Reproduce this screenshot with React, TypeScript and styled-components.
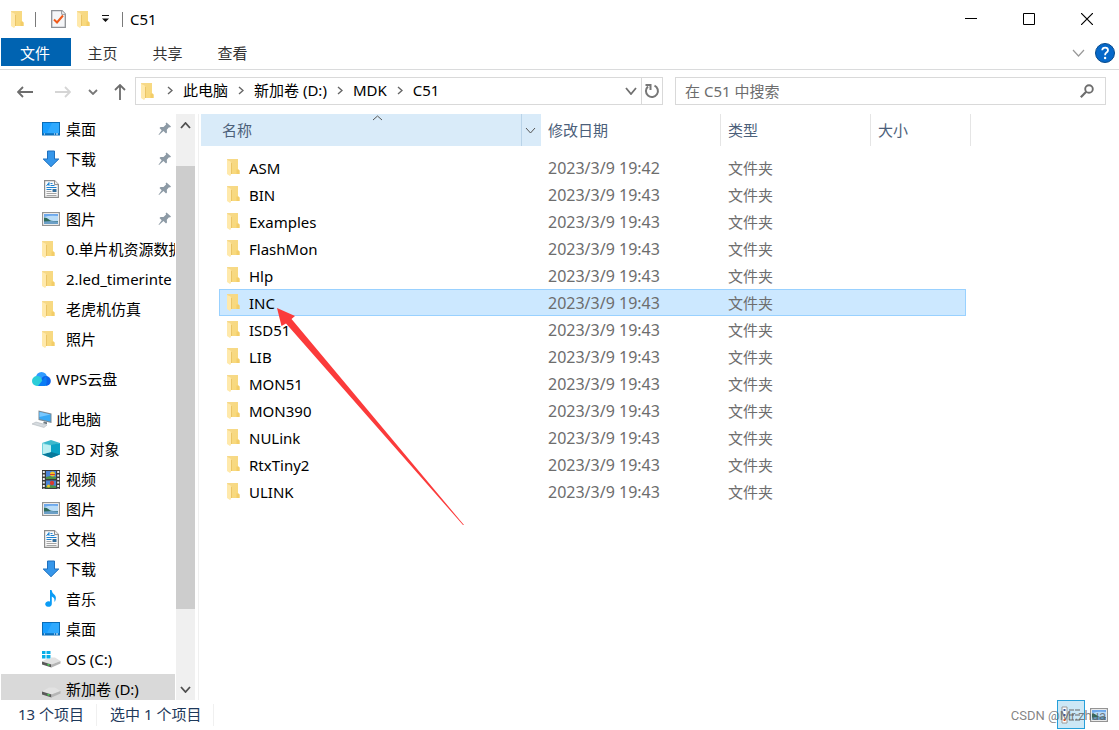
import React from "react";
import styled, { createGlobalStyle, css } from "styled-components";

const GlobalStyle = createGlobalStyle`
  * { box-sizing: border-box; }
  body {
    margin: 0;
    background: #fff;
    color: #000;
    font: 15px/20px "Noto Sans", "Noto Sans CJK SC", sans-serif;
  }
  button, input {
    font: inherit;
    color: inherit;
    background: none;
    border: 0;
    padding: 0;
    margin: 0;
  }
  svg { display: block; flex: none; }
`;

const Window = styled.div`
  position: relative;
  display: flex;
  flex-direction: column;
  height: 100vh;
  overflow: hidden;
`;

/* ---------- title bar ---------- */

const TitleBar = styled.header`
  display: flex;
  align-items: center;
  justify-content: space-between;
  height: 38px;
  padding: 0 3px 0 11px;
`;

const QuickAccess = styled.div`
  display: flex;
  align-items: center;
`;

const Divider = styled.span<{ $gap: number }>`
  width: 1px;
  height: 15px;
  margin-left: ${(p) => p.$gap}px;
  background: #7a7a7a;
`;

const QuickButton = styled.button<{ $gap: number }>`
  margin-left: ${(p) => p.$gap}px;
`;

const WindowTitle = styled.h1`
  margin: 0 0 0 7px;
  font-size: 15px;
  font-weight: 400;
`;

const WindowControls = styled.div`
  display: flex;
`;

const ControlButton = styled.button`
  display: flex;
  align-items: center;
  justify-content: center;
  width: 58px;
  height: 38px;
`;

/* ---------- ribbon ---------- */

const Ribbon = styled.nav`
  display: flex;
  align-items: flex-start;
  height: 32px;
  padding: 0 4px 0 1px;
  border-bottom: 1px solid #dadbdc;
`;

const RibbonTab = styled.button<{ $primary?: boolean }>`
  width: ${(p) => (p.$primary ? 70 : 65)}px;
  height: 28px;
  padding: 2px 2px 0 0;
  color: ${(p) => (p.$primary ? "#fff" : "#333")};
  background: ${(p) => (p.$primary ? "#0063b1" : "none")};
`;

const RibbonTools = styled.div`
  display: flex;
  align-items: center;
  gap: 10px;
  height: 30px;
  margin-left: auto;
`;

/* ---------- navigation bar ---------- */

const NavBar = styled.div`
  display: flex;
  align-items: center;
  height: 44px;
  padding: 0 13px 2px 5px;
`;

const NavButton = styled.button<{ $width: number }>`
  display: flex;
  align-items: center;
  justify-content: center;
  width: ${(p) => p.$width}px;
  height: 28px;
  padding-top: 2px;
`;

const field = css`
  display: flex;
  align-items: center;
  height: 28px;
  min-width: 0;
  border: 1px solid #d9d9d9;
`;

const AddressBar = styled.div`
  ${field}
  flex: 521 1 0;
  padding-left: 5px;
`;

const Crumbs = styled.ol`
  display: flex;
  flex: 1;
  min-width: 0;
  margin: 0;
  padding: 0 0 2px 3px;
  list-style: none;
  overflow: hidden;
  white-space: nowrap;
`;

const Crumb = styled.li`
  display: flex;
  align-items: center;
`;

const CrumbArrow = styled.span`
  display: flex;
  justify-content: center;
  width: 26px;
`;

const AddressButton = styled.button<{ $divided?: boolean }>`
  display: flex;
  align-items: center;
  justify-content: center;
  width: ${(p) => (p.$divided ? 21 : 20)}px;
  height: 26px;
  border-left: ${(p) => (p.$divided ? "1px solid #d9d9d9" : "0")};
`;

const SearchBox = styled.label`
  ${field}
  flex: 409 1 0;
  margin-left: 12px;
  padding: 0 11px 0 9px;
`;

const SearchInput = styled.input`
  flex: 1;
  min-width: 0;
  outline: 0;
  &::placeholder { color: #6d6d6d; opacity: 1; }
`;

/* ---------- body ---------- */

const Body = styled.div`
  display: flex;
  flex: 1;
  min-height: 0;
`;

const Sidebar = styled.aside`
  display: flex;
  padding-right: 3px;
  margin-right: 2px;
  border-right: 1px solid #f0f0f0;
`;

const Tree = styled.ul`
  width: 176px;
  margin: 0;
  padding: 0 1px;
  list-style: none;
  overflow: hidden;
`;

const TreeItem = styled.li<{ $root?: boolean; $selected?: boolean }>`
  display: flex;
  align-items: center;
  gap: 6px;
  height: 30px;
  margin-top: ${(p) => (p.$root ? 10 : 0)}px;
  padding-left: ${(p) => (p.$root ? 31 : 41)}px;
  background: ${(p) => (p.$selected ? "#d9d9d9" : "none")};
`;

const TreeIcon = styled.span`
  display: flex;
  flex: none;
  width: 18px;
`;

const TreeLink = styled.a`
  flex: 1;
  min-width: 0;
  overflow: hidden;
  white-space: nowrap;
  color: inherit;
  text-decoration: none;
`;

const PinSlot = styled.span`
  margin-right: 3px;
`;

const ScrollBar = styled.div`
  display: flex;
  flex-direction: column;
  width: 19px;
  background: #f0f0f0;
`;

const ScrollButton = styled.button`
  display: flex;
  align-items: center;
  justify-content: center;
  height: 22px;
`;

const ScrollSpace = styled.div<{ $share: number }>`
  flex: ${(p) => p.$share} 1 0;
`;

const ScrollThumb = styled(ScrollSpace)`
  background: #cdcdcd;
`;

const Content = styled.main`
  position: relative;
  flex: 1;
  min-width: 0;
  overflow: hidden;
`;

const FileTable = styled.table`
  display: block;
`;

const FileHead = styled.thead`
  display: block;
  margin-bottom: 8px;
  color: #4c607a;
`;

const FileBody = styled.tbody`
  display: block;
`;

const HeadRow = styled.tr`
  display: grid;
  grid-template-columns: 340px 180px 150px 100px;
  height: 32px;
`;

const HeadCell = styled.th<{ $sorted?: boolean }>`
  position: relative;
  display: flex;
  align-items: center;
  padding: 0 0 0 ${(p) => (p.$sorted ? 21 : 7)}px;
  font-weight: 400;
  background: ${(p) => (p.$sorted ? "#d9ebf9" : "none")};
  border-right: ${(p) => (p.$sorted ? "0" : "1px solid #e5e5e5")};
`;

const SortMark = styled.span`
  position: absolute;
  top: 1px;
  left: 171px;
`;

const FilterButton = styled.button`
  display: flex;
  align-items: center;
  justify-content: center;
  width: 20px;
  height: 32px;
  margin-left: auto;
  padding-right: 2px;
  border-left: 1px solid #b9d3e8;
`;

const FileRow = styled.tr<{ $selected?: boolean }>`
  display: grid;
  grid-template-columns: 322px 180px 150px 95px;
  width: 747px;
  height: 27px;
  margin-left: 18px;
  ${(p) =>
    p.$selected &&
    css`
      background: #cce8ff;
      box-shadow: inset 0 0 0 1px #99d1ff;
    `}
`;

const FileCell = styled.td<{ $name?: boolean }>`
  display: flex;
  align-items: center;
  gap: 9px;
  padding: 0 0 0 ${(p) => (p.$name ? 8 : 7)}px;
  color: ${(p) => (p.$name ? "#000" : "#6d6d6d")};
`;

const DateText = styled.time`
  font-size: 16px;
`;

const Pointer = styled.svg`
  position: absolute;
  left: 76px;
  top: 194px;
  pointer-events: none;
`;

/* ---------- status bar ---------- */

const StatusBar = styled.footer`
  display: flex;
  align-items: center;
  height: 30px;
  padding: 0 11px 1px 18px;
  color: #1e395b;
`;

const StatusText = styled.span`
  padding: 0 12px 2px 0;
  margin-right: 13px;
  border-right: 1px solid #f0f0f0;
`;

const ViewButtons = styled.div`
  display: flex;
  align-items: center;
  gap: 4px;
  margin-left: auto;
`;

const ViewButton = styled.button<{ $active?: boolean }>`
  display: flex;
  align-items: center;
  justify-content: center;
  width: ${(p) => (p.$active ? 28 : 19)}px;
  height: 29px;
  background: ${(p) => (p.$active ? "#cce8f6" : "none")};
  border: ${(p) => (p.$active ? "1px solid #26a0da" : "0")};
`;

const Watermark = styled.span`
  position: absolute;
  right: 13px;
  bottom: 4px;
  font-family: Roboto, sans-serif;
  font-size: 13px;
  color: rgba(90, 90, 90, 0.75);
`;

/* ---------- icons ---------- */

const FolderIcon = () => (
  <svg width="13" height="17" viewBox="0 0 13 17">
    <defs>
      <linearGradient id="folderBody" x1="0" y1="0" x2="1" y2="1">
        <stop offset="0" stopColor="#f6d98b" />
        <stop offset="1" stopColor="#f9d978" />
      </linearGradient>
    </defs>
    <path d="M0 0h11v10l1.500 1.500V15H2z" fill="url(#folderBody)" />
    <path d="M9.500 10.500h1.500l1.500 1V15H9.500z" fill="#f3cd69" />
    <path d="M0 1l3.500 1.500q.5.500.5 1.500v12l-1 1-3-2z" fill="#ffe9ab" />
    <path d="M4.500 4v11" stroke="#ebc566" strokeWidth="1" />
  </svg>
);

const CheckDocIcon = () => (
  <svg width="15" height="18" viewBox="0 0 15 18">
    <path d="M.7.700h10.300l3.300 3.300v13.300H.7z" fill="#f5f6f8" stroke="#8e9196" strokeWidth="1.300" />
    <path d="M10.700.7v3.600h3.600" fill="#fff" stroke="#8e9196" />
    <path d="M3 9.500l3 3 6-7" fill="none" stroke="#f05a1a" strokeWidth="2" />
  </svg>
);

const CustomizeIcon = () => (
  <svg width="7" height="8" viewBox="0 0 7 8">
    <path d="M0 0h7v1H0zM0 3.500h7L3.500 7z" fill="#111" />
  </svg>
);

type ChevronProps = { w: number; h: number; dir: "up" | "down" | "right"; color?: string; weight?: number };
const Chevron = ({ w, h, dir, color = "#666", weight = 1 }: ChevronProps) => {
  const d = {
    up: `M1 ${h - 1}L${w / 2} 1L${w - 1} ${h - 1}`,
    down: `M1 1L${w / 2} ${h - 1}L${w - 1} 1`,
    right: `M1 1L${w - 1} ${h / 2}L1 ${h - 1}`,
  }[dir];
  return (
    <svg width={w} height={h}>
      <path d={d} fill="none" stroke={color} strokeWidth={weight} />
    </svg>
  );
};

const ArrowIcon = ({ dir, color }: { dir: "left" | "right" | "up"; color: string }) => (
  <svg width="16" height="16" viewBox="0 0 16 16">
    <g
      transform={dir === "left" ? undefined : dir === "right" ? "rotate(180 8 8)" : "rotate(90 8 8)"}
      fill="none"
      stroke={color}
      strokeWidth="1.800"
    >
      <path d="M1 8h15M6 3L1 8l5 5" />
    </g>
  </svg>
);

const RefreshIcon = () => (
  <svg width="16" height="16" viewBox="0 0 16 16">
    <path d="M10.500 2.600A6 6 0 1 1 4 3.500" fill="none" stroke="#777" strokeWidth="2" />
    <path d="M1.500 2h5v5" fill="none" stroke="#777" strokeWidth="2" />
  </svg>
);

const SearchIcon = () => (
  <svg width="14" height="14" viewBox="0 0 14 14">
    <circle cx="9" cy="5" r="3.800" fill="none" stroke="#6d6d6d" strokeWidth="1.900" />
    <path d="M6.200 7.800L.8 13.200" stroke="#6d6d6d" strokeWidth="2.200" />
  </svg>
);

const HelpIcon = () => (
  <svg width="20" height="20" viewBox="0 0 20 20">
    <circle cx="10" cy="10" r="9.500" fill="#0668c9" stroke="#064a8c" />
    <path d="M7.200 7.300Q7.400 4.700 10.200 4.700T13 7.200Q13 8.500 11.500 9.600T10.100 12.200" fill="none" stroke="#fff" strokeWidth="1.800" />
    <circle cx="10.100" cy="15" r="1.200" fill="#fff" />
  </svg>
);

const PinIcon = () => (
  <svg width="14" height="14" viewBox="0 0 14 14">
    <path d="M8.500.5L13 4.500l-1 1-1-.3-2.200 2.600.2 2.700-1 1-2.500-2.500L1 13l-.5-.3 3.200-4.400L1.500 6l1-1 3 .1 2.600-2.500L7.600 1.500z" fill="#8d9aa5" />
  </svg>
);

const DesktopIcon = () => (
  <svg width="18" height="14" viewBox="0 0 18 14">
    <rect x=".5" y=".5" width="17" height="12.500" fill="#1a9fff" stroke="#0a6db8" />
    <path d="M10 1h7v10H5z" fill="#3fb2ff" opacity=".6" />
    <path d="M1 12h16" stroke="#075a9c" />
    <path d="M2 12h1M12 12h1M14 12h2" stroke="#fff" />
  </svg>
);

const DownloadIcon = () => (
  <svg width="18" height="18" viewBox="0 0 18 18">
    <path d="M5.500 1h7v8h4.300L9 16.700 1.200 9h4.300z" fill="#3596ea" stroke="#1e6fbd" />
  </svg>
);

const DocumentIcon = () => (
  <svg width="18" height="18" viewBox="0 0 18 18">
    <path d="M2.600.6h9.900l3.900 3.900v12.900H2.600z" fill="#fafafa" stroke="#8c8c8c" strokeWidth="1.200" />
    <path d="M12.500.6v4h4" fill="#eee" stroke="#8c8c8c" />
    <path d="M4.500 6L7 2.500V6M5.500 4.500H7M8.500 3.500h2M8.500 5.500h4M4.500 7.500h10M4.500 9.500h5" fill="none" stroke="#1b82d2" />
    <path d="M4.500 11.500h5M4.500 13.500h10M4.500 15.500h10" stroke="#a5a5a5" />
    <rect x="10.500" y="9" width="4" height="3" fill="#356f9c" />
  </svg>
);

const PictureIcon = () => (
  <svg width="18" height="14" viewBox="0 0 18 14">
    <rect x=".6" y=".6" width="16.800" height="12.800" fill="#fff" stroke="#949494" strokeWidth="1.200" />
    <rect x="2" y="2" width="14" height="10" fill="#b9dcf8" />
    <path d="M2 2h14v2Q8 3 2 5z" fill="#6da8ec" />
    <path d="M2 5.500q3 0 5 2t9 1.500v1H2z" fill="#2f6b5d" />
    <path d="M2 9.500Q9 8.500 16 9.500V12H2z" fill="#6b9fc6" />
  </svg>
);

const CloudIcon = () => (
  <svg width="19" height="14" viewBox="0 0 19 14">
    <circle cx="9.500" cy="5.500" r="5.500" fill="#2f9bff" />
    <circle cx="13.800" cy="9" r="5" fill="#0b62ea" />
    <path d="M5 4a5 5 0 0 1 5 4l4 6H5A5 5 0 0 1 5 4z" fill="#2bcdd9" />
    <path d="M6 14l8-10q2 7-1 10z" fill="#0a7cf5" />
  </svg>
);

const ComputerIcon = () => (
  <svg width="20" height="18" viewBox="0 0 20 18">
    <path d="M6.500.5l13 3v9.500l-13-3z" fill="#7c8b96" />
    <path d="M7.500 2l11 2.500v7L7.500 9z" fill="#38a9f5" />
    <path d="M7.500 2l11 2.500L7.500 7z" fill="#77c8ff" />
    <path d="M12 11.500l3 .7v2l-4-1z" fill="#6f7b83" />
    <path d="M0 14l4-2 11 3-3 2.500z" fill="#d5dade" stroke="#a5adb3" strokeWidth=".5" />
  </svg>
);

const CubeIcon = () => (
  <svg width="18" height="18" viewBox="0 0 18 18">
    <path d="M0 3l9-3 9 3-9 3z" fill="#3db9cc" />
    <path d="M0 3l9 2v13l-9-3.500z" fill="#6fd3de" />
    <path d="M18 3L9 5v13l9-3.500z" fill="#0aa2c5" />
    <path d="M0 14.500L9 12l9 2.500L9 18z" fill="#08799b" />
    <path d="M1 4l8 1.500V12l-8 2z" fill="#bceff2" />
  </svg>
);

const VideoIcon = () => (
  <svg width="18" height="19" viewBox="0 0 18 19">
    <rect width="18" height="19" fill="#3b3b3b" />
    <path d="M1.800 1v18M16.200 1v18" stroke="#eee" strokeWidth="2" strokeDasharray="2 1.500" />
    <path d="M4 1h10v8H4zM4 10.500h10V18H4z" fill="#4a83d8" />
    <path d="M4 7l4-1 6 1v2H4zM4 16l5-1 5 1v2H4z" fill="#4c9148" />
    <circle cx="10.500" cy="4" r="2.500" fill="#efc326" />
    <path d="M8 4.500h5" stroke="#d93b2f" />
    <circle cx="10" cy="13" r="2.200" fill="#d93b2f" />
    <circle cx="6.500" cy="16" r="1.500" fill="#efc326" />
  </svg>
);

const MusicIcon = () => (
  <svg width="18" height="18" viewBox="0 0 18 18">
    <path d="M8 0h1.500q.5 3 3 4.700 2.500 2.500.5 6.800h-.7q1-3.500-2.500-5V14a3.300 2.800 0 1 1-1.800-2.500z" fill="#0b9cf5" />
  </svg>
);

const DriveIcon = ({ system }: { system?: boolean }) => (
  <svg width="19" height="18" viewBox="0 0 19 18">
    <path d="M0 11.500L7 7.500h6l5.500 3.500-9 3.500z" fill="#e2e2e2" />
    <path d="M0 11.500l9.500 3v3L0 14.500z" fill="#5a5a5a" />
    <path d="M9.500 14.500l9-3.500v2.500l-9 4z" fill="#b5b5b5" />
    <path d="M5.500 14.500l2 .6" stroke="#48dc52" strokeWidth="1.500" />
    {system && (
      <>
        <path d="M0 0h9v9H0z" fill="#fff" />
        <path d="M0 1h3.500v3H0zM4.500 1h4v3h-4zM0 5h3.500v3.500H0zM4.500 5h4v3.500h-4z" fill="#08aee8" />
      </>
    )}
  </svg>
);

const DetailsIcon = () => (
  <svg width="20" height="18" viewBox="0 0 20 18">
    <path d="M1 1h5v16H1z" fill="#fff" stroke="#9a9a9a" />
    <path d="M3.500 3v2M3.500 8v2" stroke="#345a9c" strokeWidth="2" />
    <path d="M3.500 13v2" stroke="#d7521f" strokeWidth="2" />
    <path d="M8 4h5M14 4h5M8 9h5M14 9h5M8 14h5M14 14h5" stroke="#666" />
  </svg>
);

/* ---------- data ---------- */

type Node = { label: string; icon: React.ReactNode; root?: boolean; pinned?: boolean; selected?: boolean };

const tree: Node[] = [
  { label: "桌面", icon: <DesktopIcon />, pinned: true },
  { label: "下载", icon: <DownloadIcon />, pinned: true },
  { label: "文档", icon: <DocumentIcon />, pinned: true },
  { label: "图片", icon: <PictureIcon />, pinned: true },
  { label: "0.单片机资源数据", icon: <FolderIcon /> },
  { label: "2.led_timerinte", icon: <FolderIcon /> },
  { label: "老虎机仿真", icon: <FolderIcon /> },
  { label: "照片", icon: <FolderIcon /> },
  { label: "WPS云盘", icon: <CloudIcon />, root: true },
  { label: "此电脑", icon: <ComputerIcon />, root: true },
  { label: "3D 对象", icon: <CubeIcon /> },
  { label: "视频", icon: <VideoIcon /> },
  { label: "图片", icon: <PictureIcon /> },
  { label: "文档", icon: <DocumentIcon /> },
  { label: "下载", icon: <DownloadIcon /> },
  { label: "音乐", icon: <MusicIcon /> },
  { label: "桌面", icon: <DesktopIcon /> },
  { label: "OS (C:)", icon: <DriveIcon system /> },
  { label: "新加卷 (D:)", icon: <DriveIcon />, selected: true },
];

const folders = [
  "ASM", "BIN", "Examples", "FlashMon", "Hlp", "INC", "ISD51",
  "LIB", "MON51", "MON390", "NULink", "RtxTiny2", "ULINK",
].map((name) => ({
  name,
  date: name === "ASM" ? "2023/3/9 19:42" : "2023/3/9 19:43",
  selected: name === "INC",
}));

const path = ["此电脑", "新加卷 (D:)", "MDK", "C51"];

export default function App() {
  return (
    <>
      <GlobalStyle />
      <Window>
        <TitleBar>
          <QuickAccess>
            <FolderIcon />
            <Divider $gap={11} />
            <QuickButton $gap={15} aria-label="属性"><CheckDocIcon /></QuickButton>
            <QuickButton $gap={11} aria-label="新建文件夹"><FolderIcon /></QuickButton>
            <QuickButton $gap={12} aria-label="自定义快速访问工具栏"><CustomizeIcon /></QuickButton>
            <Divider $gap={13} />
            <WindowTitle>C51</WindowTitle>
          </QuickAccess>
          <WindowControls>
            <ControlButton aria-label="最小化">
              <svg width="12" height="12"><path d="M0 5.500h12" stroke="#000" /></svg>
            </ControlButton>
            <ControlButton aria-label="最大化">
              <svg width="12" height="12"><path d="M.5.5h11v11H.5z" fill="none" stroke="#000" /></svg>
            </ControlButton>
            <ControlButton aria-label="关闭">
              <svg width="12" height="12"><path d="M0 0l12 12M12 0L0 12" stroke="#000" strokeWidth="1.200" /></svg>
            </ControlButton>
          </WindowControls>
        </TitleBar>

        <Ribbon>
          <RibbonTab $primary>文件</RibbonTab>
          <RibbonTab>主页</RibbonTab>
          <RibbonTab>共享</RibbonTab>
          <RibbonTab>查看</RibbonTab>
          <RibbonTools>
            <button aria-label="展开功能区"><Chevron w={13} h={8} dir="down" color="#999" weight={1.2} /></button>
            <button aria-label="帮助"><HelpIcon /></button>
          </RibbonTools>
        </Ribbon>

        <NavBar>
          <NavButton $width={39} aria-label="后退"><ArrowIcon dir="left" color="#6d6d6d" /></NavButton>
          <NavButton $width={38} aria-label="前进"><ArrowIcon dir="right" color="#d5d5d5" /></NavButton>
          <NavButton $width={22} aria-label="最近浏览的位置"><Chevron w={10} h={6} dir="down" color="#777" weight={1.8} /></NavButton>
          <NavButton $width={31} aria-label="上移"><ArrowIcon dir="up" color="#6d6d6d" /></NavButton>
          <AddressBar>
            <FolderIcon />
            <Crumbs>
              {path.map((part) => (
                <Crumb key={part}>
                  <CrumbArrow><Chevron w={6} h={9} dir="right" weight={1.4} /></CrumbArrow>
                  <button>{part}</button>
                </Crumb>
              ))}
            </Crumbs>
            <AddressButton aria-label="以前的位置"><Chevron w={12} h={8} dir="down" color="#707070" weight={1.8} /></AddressButton>
            <AddressButton $divided aria-label="刷新"><RefreshIcon /></AddressButton>
          </AddressBar>
          <SearchBox>
            <SearchInput type="text" placeholder="在 C51 中搜索" aria-label="搜索" />
            <SearchIcon />
          </SearchBox>
        </NavBar>

        <Body>
          <Sidebar>
            <Tree>
              {tree.map((node, i) => (
                <TreeItem key={i} $root={node.root} $selected={node.selected}>
                  <TreeIcon>{node.icon}</TreeIcon>
                  <TreeLink href="#">{node.label}</TreeLink>
                  {node.pinned && <PinSlot><PinIcon /></PinSlot>}
                </TreeItem>
              ))}
            </Tree>
            <ScrollBar>
              <ScrollButton aria-label="向上滚动"><Chevron w={11} h={7} dir="up" color="#505050" weight={1.8} /></ScrollButton>
              <ScrollSpace $share={30} />
              <ScrollThumb $share={443} />
              <ScrollSpace $share={69} />
              <ScrollButton aria-label="向下滚动"><Chevron w={11} h={7} dir="down" color="#505050" weight={1.8} /></ScrollButton>
            </ScrollBar>
          </Sidebar>

          <Content>
            <FileTable>
              <FileHead>
                <HeadRow>
                  <HeadCell $sorted>
                    <button>名称</button>
                    <SortMark><Chevron w={11} h={6} dir="up" color="#555" /></SortMark>
                    <FilterButton aria-label="筛选"><Chevron w={11} h={7} dir="down" color="#555" /></FilterButton>
                  </HeadCell>
                  <HeadCell><button>修改日期</button></HeadCell>
                  <HeadCell><button>类型</button></HeadCell>
                  <HeadCell><button>大小</button></HeadCell>
                </HeadRow>
              </FileHead>
              <FileBody>
                {folders.map((f) => (
                  <FileRow key={f.name} $selected={f.selected}>
                    <FileCell $name><FolderIcon />{f.name}</FileCell>
                    <FileCell><DateText>{f.date}</DateText></FileCell>
                    <FileCell>文件夹</FileCell>
                    <FileCell />
                  </FileRow>
                ))}
              </FileBody>
            </FileTable>
            <Pointer width="187" height="217" viewBox="0 0 187 217">
              <path d="M0 0L18 8l-3.500 3L187 217 186 217 9 15.500l-4.500 2.500z" fill="#fb3b3b" />
            </Pointer>
          </Content>
        </Body>

        <StatusBar>
          <StatusText>13 个项目</StatusText>
          <StatusText>选中 1 个项目</StatusText>
          <ViewButtons>
            <ViewButton $active aria-label="详细信息"><DetailsIcon /></ViewButton>
            <ViewButton aria-label="大图标"><PictureIcon /></ViewButton>
          </ViewButtons>
        </StatusBar>
        <Watermark>CSDN @Mr.zhua</Watermark>
      </Window>
    </>
  );
}
